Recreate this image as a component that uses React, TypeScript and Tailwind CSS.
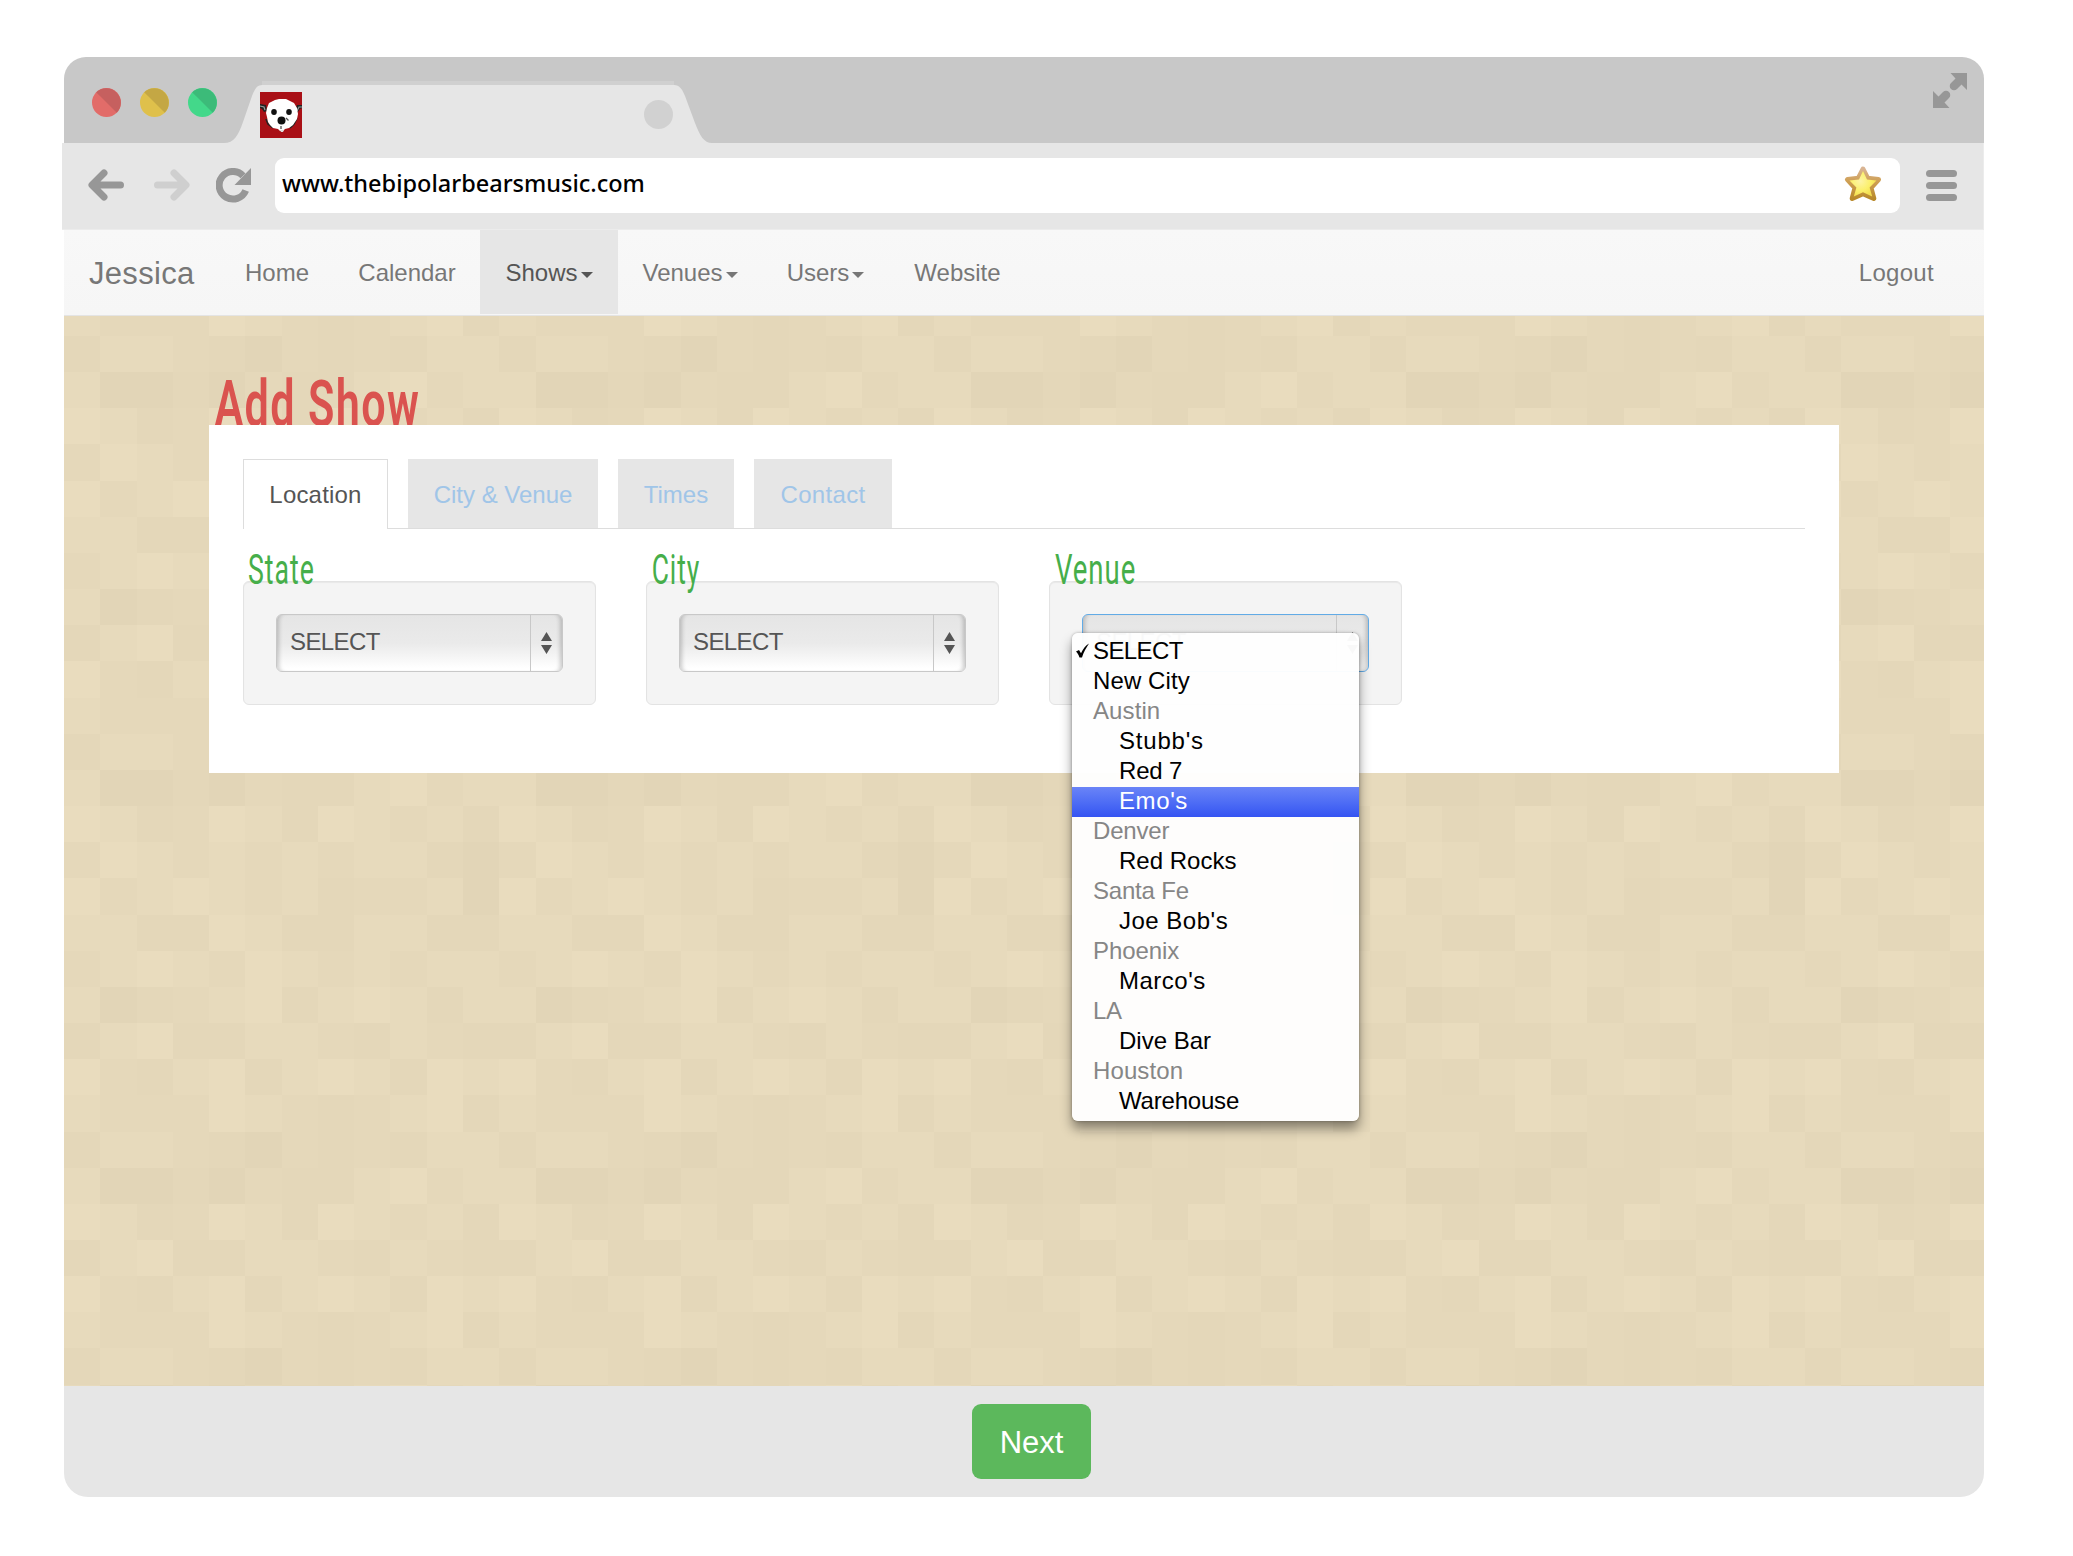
import React from "react";

const TONES = ["#e2d5b7", "#e4d7b9", "#e5d8ba", "#e7dabc", "#e9dcbe"];

const TILE = [
  "300102113423",
  "431243143231",
  "243232323310",
  "423432312230",
  "331143113311",
  "234324323233",
  "301234134313",
  "134113321321",
  "421341343143",
  "322243212341",
  "133210212133",
];

/* Vertical order of the tile rows, from the top edge of the page body. */
const ROW_ORDER = [
  9, 10, 0, 1, 2, 3, 4, 5, 6, 7, 8, 9, 10, 0, 1, 2, 3, 4, 5, 6, 7, 8, 9, 10, 0, 1, 7, 8, 9, 10, 0,
];

function PixelBackdrop() {
  const cw = 36.27;
  const ch = 36.16;
  return (
    <svg className="absolute inset-0 h-full w-full" aria-hidden="true" shapeRendering="crispEdges">
      {ROW_ORDER.map((row, r) =>
        Array.from({ length: 54 }, (_, c) => (
          <rect
            key={`${r}-${c}`}
            x={Math.round(c * cw)}
            y={Math.round(20 - ch + r * ch)}
            width={37}
            height={37}
            fill={TONES[Number(TILE[row][c % 12])]}
          />
        )),
      )}
    </svg>
  );
}

function Light({ base, shade }: { base: string; shade: string }) {
  return (
    <svg className="h-[29px] w-[29px]" viewBox="0 0 29 29">
      <circle cx="14.5" cy="14.5" r="14.5" fill={base} />
      <path d="M4.2 4.3A14.5 14.5 0 0 1 24.8 24.7Z" fill={shade} />
    </svg>
  );
}

function BearIcon() {
  return (
    <svg className="h-[46px] w-[42px]" viewBox="0 0 42 46">
      <rect width="42" height="46" fill="#a91016" />
      <path d="M0 12l6 1 1 6-3 1-2-3-2-1zM42 13l-5 0-2 6 2 2 3-4 2-1z" fill="#222" />
      <path d="M0 14l4 1 1 3M42 15l-3 0-2 4" fill="none" stroke="#999" strokeWidth="1.2" />
      <path d="M6 27l2 5 5 4M37 26l-3 6-4 4" fill="none" stroke="#222" strokeWidth="1.6" />
      <path
        d="M15 8l4-1 7 0 4 2 4 2 3 5 1 6-1 5-2 3-2 3-4 3-4 1-2 2-3 0-2-2-5-1-3-3-2-3-1-5-1-4 1-5 2-5z"
        fill="#fff"
      />
      <ellipse cx="14" cy="20" rx="2.8" ry="3" fill="#111" />
      <ellipse cx="29" cy="20" rx="2.8" ry="3" fill="#111" />
      <ellipse cx="21.5" cy="28.5" rx="4" ry="4" fill="#111" />
      <path d="M26 26l2.500 2.500M21 34v3" stroke="#555" strokeWidth="1.3" />
      <path d="M20 38h4l-1 2h-2z" fill="#ddd" />
    </svg>
  );
}

function TabStrip() {
  return (
    <div className="relative flex h-[86px] items-start rounded-t-[22px] bg-[#c8c8c8]">
      <div className="mt-[31px] ml-[28px] flex gap-[19px]">
        <Light base="#e26c69" shade="#c6605f" />
        <Light base="#dfc04b" shade="#c4a744" />
        <Light base="#43d88a" shade="#3cbb79" />
      </div>
      <svg className="absolute top-[23px] left-[160px] h-[63px] w-[490px]" viewBox="0 0 490 63">
        <path d="M38 1h412v6H38z" fill="#d0d0d0" />
        <path
          d="M0 63C10 63 14 56 19 42L28 16C32 6 34 5 40 5H448C454 5 457 6 461 16L471 43C476 56 480 63 488 63Z"
          fill="#e6e6e6"
        />
      </svg>
      <div className="relative mt-[35px] ml-[43px] flex w-[413px] items-center justify-between">
        <BearIcon />
        <span className="mt-[-1px] h-[29px] w-[29px] rounded-full bg-[#d1d1d1]" />
      </div>
      <svg className="mt-[16px] mr-[17px] ml-auto h-[35px] w-[34px]" viewBox="0 0 34 35" fill="#979797">
        <path d="M17.5 0H34V17L28.5 11.5L24 16A4.2 4.2 0 0 1 18 10L22.5 5.5Z" />
        <path d="M16.5 35H0V18L5.500 23.500L10 19A4.2 4.2 0 0 1 16 25L11.500 29.500Z" />
      </svg>
    </div>
  );
}

function Arrow({ flip, color }: { flip?: boolean; color: string }) {
  return (
    <svg
      className={flip ? "h-[32px] w-[36px] -scale-x-100" : "h-[32px] w-[36px]"}
      viewBox="0 0 36 32"
      fill="none"
      stroke={color}
      strokeWidth="7"
      strokeLinecap="round"
      strokeLinejoin="round"
    >
      <path d="M16 4L4 16L16 28M5 16H32.500" />
    </svg>
  );
}

function Toolbar() {
  return (
    <div className="-ml-[2px] flex h-[87px] items-center border-r-[1px] border-b-[1px] border-[#ececec] bg-[#e6e6e6] pb-[2px]">
      <div className="ml-[26px] flex items-center gap-[30px]">
        <Arrow color="#979797" />
        <Arrow color="#cfcfcf" flip />
      </div>
      <svg className="ml-[26px] h-[35px] w-[36px]" viewBox="0 0 36 35">
        <path
          d="M29.700 22.500A13.800 13.800 0 1 1 27 7.800"
          fill="none"
          stroke="#979797"
          strokeWidth="7"
        />
        <path d="M35 0V17H18.500Z" fill="#979797" />
      </svg>
      <div className="ml-[23px] flex h-[55px] w-[1625px] items-center justify-between rounded-[9px] bg-white pr-[18px] pb-[2px] pl-[7px]">
        <span className="font-['Noto_Sans'] text-[23.5px] font-medium text-black">
          www.thebipolarbearsmusic.com
        </span>
        <svg className="h-[38px] w-[38px]" viewBox="0 0 38 38">
          <defs>
            <linearGradient id="starStroke" x1="0" y1="0" x2="0" y2="1">
              <stop offset="0" stopColor="#d9b493" />
              <stop offset="0.4" stopColor="#cfa055" />
              <stop offset="1" stopColor="#b98a2c" />
            </linearGradient>
            <radialGradient id="starFill" cx="0.4" cy="0.4" r="0.6">
              <stop offset="0" stopColor="#fdf4a8" />
              <stop offset="0.6" stopColor="#fbf06c" />
              <stop offset="1" stopColor="#f3df50" />
            </radialGradient>
          </defs>
          <path
            d="M19 4L23.600 13.200L34.500 14.500L27 22.800L29.800 33.500L19 28.800L8.200 33.500L11 22.800L3.500 14.500L14.400 13.200Z"
            fill="url(#starStroke)"
            stroke="url(#starStroke)"
            strokeWidth="5"
            strokeLinejoin="round"
          />
          <path
            d="M19 6L23 14.600L32.500 15.500L25.600 22.500L28.200 31.500L19 27.200L9.800 31.500L12.400 22.500L5.500 15.500L15 14.600Z"
            fill="url(#starFill)"
            strokeLinejoin="round"
          />
        </svg>
      </div>
      <div className="ml-[26px] flex flex-col gap-[5px]">
        <span className="h-[7px] w-[31px] rounded-full bg-[#979797]" />
        <span className="h-[7px] w-[31px] rounded-full bg-[#979797]" />
        <span className="h-[7px] w-[31px] rounded-full bg-[#979797]" />
      </div>
    </div>
  );
}

const NAV = [
  { label: "Home", box: "w-[114px]" },
  { label: "Calendar", box: "w-[146px]" },
  { label: "Shows", box: "w-[138px]", menu: true, active: true },
  { label: "Venues", box: "w-[144px]", menu: true },
  { label: "Users", box: "w-[127px]", menu: true },
  { label: "Website", box: "w-[137px]" },
];

function NavBar() {
  return (
    <nav className="flex h-[86px] border-b border-[#e4e4e4] bg-linear-to-b from-[#f8f8f8] to-[#f6f6f6] text-2xl text-[#777]">
      <span className="flex w-[156px] items-center pt-[2px] pl-[25px] text-[31px] tracking-[0.3px]">
        Jessica
      </span>
      {NAV.map((n) => (
        <span
          key={n.label}
          className={`flex h-[84px] items-center justify-center pt-[2px] ${n.box} ${
            n.active ? "bg-[#e6e6e6] text-[#555]" : ""
          }`}
        >
          {n.label}
          {n.menu && (
            <svg className="mt-[3px] ml-[3px] h-[6px] w-[12px] fill-current" viewBox="0 0 12 6">
              <path d="M0 0H12L6 6Z" />
            </svg>
          )}
        </span>
      ))}
      <span className="mr-[50px] ml-auto flex items-center pt-px tracking-[0.3px]">Logout</span>
    </nav>
  );
}

function SelectBox({ focused }: { focused?: boolean }) {
  return (
    <div
      className={`flex h-[58px] rounded-[6px] border bg-[linear-gradient(180deg,#e5e5e5_0%,#eaeaea_50%,#f2f2f2_68%,#ffffff_95%)] shadow-[inset_5px_0_4px_-3px_rgba(0,0,0,0.2),inset_-5px_0_4px_-3px_rgba(0,0,0,0.2)] ${
        focused ? "border-[#62abe6]" : "border-[#c8c8c8]"
      }`}
    >
      <span className="flex flex-1 items-center pb-[3px] pl-[13px] text-2xl tracking-[-0.6px] text-[#555]">
        SELECT
      </span>
      <span className="flex w-[32px] items-center justify-center border-l border-[#c8c8c8]">
        <svg className="h-[22px] w-[11px]" viewBox="0 0 11 22" fill="#555">
          <path d="M5.500 0L11 9H0ZM0 13H11L5.500 22Z" />
        </svg>
      </span>
    </div>
  );
}

const OPTIONS = [
  { text: "SELECT", kind: "option", fit: "tracking-[-0.6px]" },
  { text: "New City", kind: "option", fit: "tracking-[0.1px]" },
  { text: "Austin", kind: "group", fit: "tracking-[0.1px]" },
  { text: "Stubb's", kind: "child", fit: "tracking-[0.8px]" },
  { text: "Red 7", kind: "child", fit: "tracking-[-0.2px]" },
  { text: "Emo's", kind: "hover", fit: "tracking-[0.6px]" },
  { text: "Denver", kind: "group", fit: "tracking-[-0.2px]" },
  { text: "Red Rocks", kind: "child", fit: "tracking-[0px]" },
  { text: "Santa Fe", kind: "group", fit: "tracking-[-0.2px]" },
  { text: "Joe Bob's", kind: "child", fit: "tracking-[0.5px]" },
  { text: "Phoenix", kind: "group", fit: "tracking-[-0.1px]" },
  { text: "Marco's", kind: "child", fit: "tracking-[0.5px]" },
  { text: "LA", kind: "group", fit: "tracking-[-0.4px]" },
  { text: "Dive Bar", kind: "child", fit: "tracking-[0px]" },
  { text: "Houston", kind: "group", fit: "tracking-[0.1px]" },
  { text: "Warehouse", kind: "child", fit: "tracking-[-0.2px]" },
];

const OPTION_STYLE: Record<string, string> = {
  option: "pl-[21px] text-black",
  group: "pl-[21px] text-[#868686]",
  child: "pl-[47px] text-black",
  hover: "pl-[47px] text-white bg-linear-to-b from-[#6a84f7] to-[#3553f2]",
};

function VenueMenu() {
  return (
    <div className="absolute top-[19px] left-[-10px] z-20 w-[287px] rounded-[6px] bg-[#fefefe]/97 py-1 shadow-[0_0_3px_rgba(0,0,0,0.3),0_8px_12px_rgba(0,0,0,0.42)]">
      {OPTIONS.map((o, i) => (
        <div
          key={o.text}
          className={`relative h-[30px] text-2xl leading-[28px] ${OPTION_STYLE[o.kind]} ${o.fit}`}
        >
          {i === 0 && (
            <svg className="absolute top-[6px] left-[3px] h-[15px] w-[15px]" viewBox="0 0 15 15">
              <path
                d="M1 8.500L4 7L6 10.200C8 6 10.500 2.500 14 0.500C11 5 8.500 9.500 7 14.500H4.500C3.800 12.200 2.600 10.200 1 8.500Z"
                fill="#000"
              />
            </svg>
          )}
          {o.text}
        </div>
      ))}
    </div>
  );
}

function Field({ label, stretch, open }: { label: string; stretch: string; open?: boolean }) {
  return (
    <div className="w-[353px]">
      <div
        className={`relative z-10 h-[52px] origin-left pt-[29px] font-['Roboto'] text-[42px] leading-[23px] tracking-[1.5px] whitespace-nowrap text-[#46ae4a] ${stretch}`}
      >
        {label}
      </div>
      <div className="h-[124px] rounded-[6px] border border-[#e3e3e3] bg-[#f4f4f4] px-[32px] pt-[32px] shadow-[inset_0_1px_1px_rgba(0,0,0,0.05)]">
        <div className="relative">
          <SelectBox focused={open} />
          {open && <VenueMenu />}
        </div>
      </div>
    </div>
  );
}

function Tabs() {
  return (
    <div className="flex h-[70px] gap-[20px] border-b border-[#dddddd] text-2xl text-[#a0c5e8]">
      <span className="z-10 flex h-[70px] w-[145px] items-center justify-center border border-b-0 border-[#dddddd] bg-white tracking-[0.2px] text-[#555]">
        Location
      </span>
      <span className="flex w-[190px] items-center justify-center bg-[#e6e6e6] pt-[2px]">City &amp; Venue</span>
      <span className="flex w-[116px] items-center justify-center bg-[#e6e6e6] pt-[2px]">Times</span>
      <span className="flex w-[138px] items-center justify-center bg-[#e6e6e6] pt-[2px] tracking-[0.3px]">
        Contact
      </span>
    </div>
  );
}

export default function App() {
  return (
    <div className="h-[1556px] w-[2073px] bg-white pt-[57px] pl-[64px] font-['Liberation_Sans',sans-serif]">
      <div className="w-[1920px]">
        <TabStrip />
        <Toolbar />
        <NavBar />
        <main className="relative h-[1070px]">
          <PixelBackdrop />
          <div className="relative pt-[68px] pl-[145px]">
            <h1 className="h-[41px] origin-left scale-x-[0.675] pl-[8px] font-['Roboto'] text-[64px] leading-[41px] font-semibold tracking-[2px] whitespace-nowrap text-[#da534f]">
              Add Show
            </h1>
            <section className="relative h-[348px] w-[1630px] bg-white px-[34px] pt-[34px]">
              <Tabs />
              <div className="flex gap-[50px]">
                <Field label="State" stretch="pl-[8px] scale-x-[0.635]" />
                <Field label="City" stretch="pl-[9px] scale-x-[0.63]" />
                <Field label="Venue" stretch="pl-[9px] scale-x-[0.655]" open />
              </div>
            </section>
          </div>
        </main>
        <footer className="flex h-[111px] justify-center rounded-b-[24px] bg-[#e6e6e6] pt-[18px] pl-[15px]">
          <button className="h-[75px] w-[119px] rounded-[9px] bg-[#5cb85c] pt-[3px] text-[31px] text-white">
            Next
          </button>
        </footer>
      </div>
    </div>
  );
}
